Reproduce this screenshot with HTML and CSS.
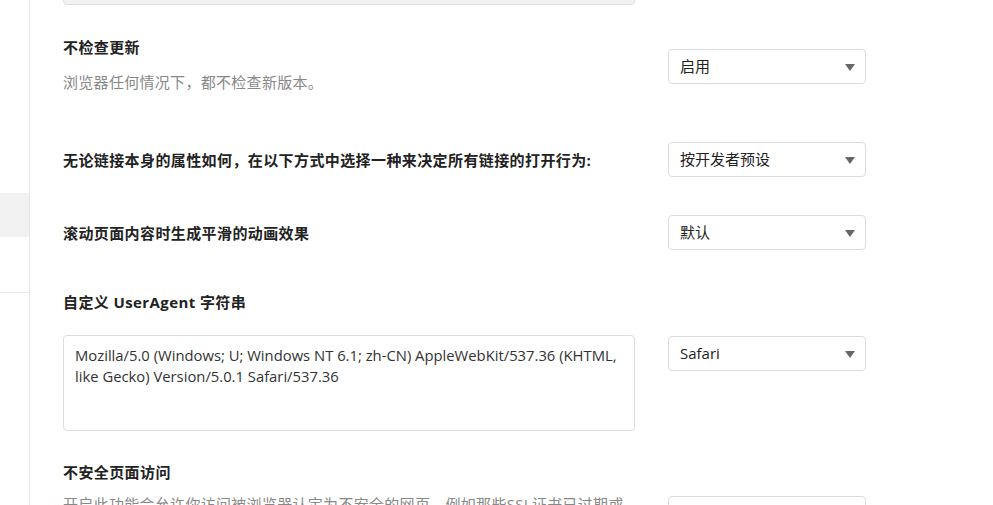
FILE: index.html
```html
<!DOCTYPE html>
<html lang="zh-CN">
<head>
    <meta charset="UTF-8">
    <meta name="viewport" content="width=device-width, initial-scale=1.0">
    <title>设置</title>
    <link rel="stylesheet" href="styles.css">
</head>
<body>
    <div class="page">
        <div class="sidebar">
            <div class="side-item"></div>
            <div class="side-item active"></div>
            <div class="side-item"></div>
            <div class="side-item divider"></div>
        </div>

        <div class="content">
            <div class="top-box"></div>

            <!-- 更新 -->
            <div class="setting first">
                <div class="label">
                    <h3>不检查更新</h3>
                    <p class="desc">浏览器任何情况下，都不检查新版本。</p>
                </div>
                <div class="select">启用</div>
            </div>

            <div class="setting center link-row">
                <div class="label">
                    <h3>无论链接本身的属性如何，在以下方式中选择一种来决定所有链接的打开行为:</h3>
                </div>
                <div class="select">按开发者预设</div>
            </div>

            <div class="setting center scroll-row">
                <div class="label">
                    <h3>滚动页面内容时生成平滑的动画效果</h3>
                </div>
                <div class="select">默认</div>
            </div>

            <!-- UserAgent -->
            <div class="setting stacked ua-row">
                <h3>自定义 UserAgent 字符串</h3>
                <div class="stacked-body">
                    <div class="textarea">Mozilla/5.0 (Windows; U; Windows NT 6.1; zh-CN) AppleWebKit/537.36 (KHTML, like Gecko) Version/5.0.1 Safari/537.36</div>
                    <div class="select ua-select">Safari</div>
                </div>
            </div>

            <div class="setting stacked unsafe-row">
                <h3>不安全页面访问</h3>
                <div class="stacked-body">
                    <p class="desc">开启此功能会允许你访问被浏览器认定为不安全的网页，例如那些SSL证书已过期或被吊销的网站。</p>
                    <div class="select unsafe-select">允许</div>
                </div>
            </div>
        </div>
    </div>
</body>
</html>
```

FILE: styles.css
```css
* {
    margin: 0;
    padding: 0;
    box-sizing: border-box;
}

body {
    font-family: "Open Sans", "Noto Sans CJK SC", sans-serif;
    background-color: #fff;
    color: #222;
    height: 100vh;
    overflow: hidden;
}

.page {
    display: flex;
    height: 100vh;
}

/* Sidebar */
.sidebar {
    width: 30px;
    flex-shrink: 0;
    border-right: 1px solid #e6e6e6;
    padding-top: 149px;
}

.side-item {
    height: 44px;
}

.side-item.active {
    background-color: #f2f2f2;
}

.side-item.divider {
    height: 0;
    margin-top: 11px;
    border-top: 1px solid #e6e6e6;
}

/* Content */
.content {
    padding-left: 33px;
}

.top-box {
    width: 572px;
    height: 40px;
    margin-top: -35px;
    background-color: #f2f2f2;
    border: 1px solid #dedede;
    border-radius: 4px;
}

.setting {
    display: grid;
    grid-template-columns: 572px 198px;
    column-gap: 33px;
}

.setting h3 {
    font-size: 15px;
    font-weight: bold;
    line-height: 20px;
    letter-spacing: 0.4px;
    color: #222;
}

.desc {
    font-size: 15px;
    line-height: 20px;
    letter-spacing: 0.3px;
    color: #888;
}

.setting.first {
    margin-top: 32px;
    align-items: start;
}

.setting.first .desc {
    margin-top: 15px;
}

.setting.first .select {
    margin-top: 12px;
}

.setting.center {
    align-items: center;
}

.link-row {
    margin-top: 50px;
}

.scroll-row {
    margin-top: 38px;
}

.select {
    position: relative;
    height: 35px;
    border: 1px solid #dcdcdc;
    border-radius: 4px;
    padding-left: 11px;
    font-size: 15px;
    line-height: 33px;
    color: #222;
    background-color: #fff;
}

/* dropdown arrow */
.select::after {
    content: "";
    position: absolute;
    right: 10px;
    top: 14px;
    border-left: 5.5px solid transparent;
    border-right: 5.5px solid transparent;
    border-top: 7px solid #666;
}

.setting.stacked {
    display: block;
}

.stacked-body {
    display: grid;
    grid-template-columns: 572px 198px;
    column-gap: 33px;
    align-items: start;
}

.ua-row {
    margin-top: 42px;
}

.ua-row .stacked-body {
    margin-top: 23px;
}

.textarea {
    height: 96px;
    border: 1px solid #dcdcdc;
    border-radius: 4px;
    padding: 9px 6px 9px 11px;
    font-size: 14.8px;
    line-height: 21px;
    color: #333;
}

.ua-select {
    margin-top: 1px;
}

.unsafe-row {
    margin-top: 31px;
}

.unsafe-row .stacked-body {
    margin-top: 12px;
}

.unsafe-select {
    margin-top: 2px;
}
```
